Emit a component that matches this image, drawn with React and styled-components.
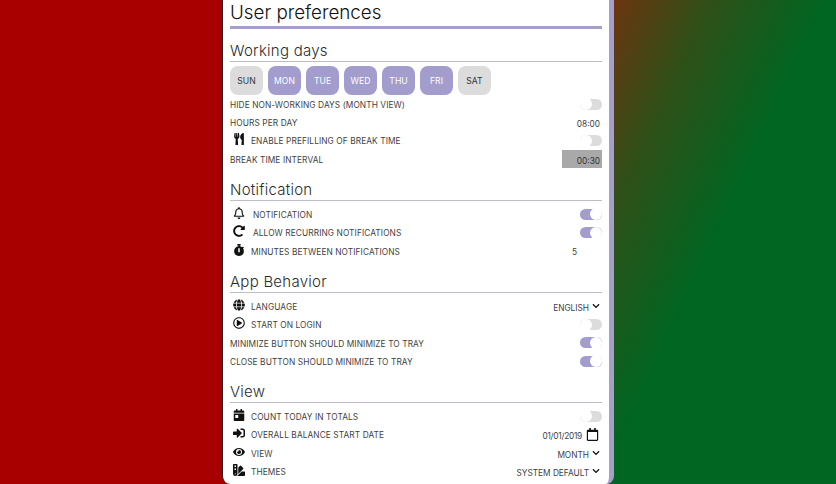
import styled, { createGlobalStyle } from "styled-components";
import {
  FaUtensils,
  FaRegBell,
  FaRedoAlt,
  FaStopwatch,
  FaGlobe,
  FaRegPlayCircle,
  FaCalendarDay,
  FaSignInAlt,
  FaEye,
  FaSwatchbook,
  FaRegCalendar,
  FaChevronDown,
} from "react-icons/fa";

const GlobalStyle = createGlobalStyle`
  html, body {
    margin: 0;
    height: 100%;
    overflow: hidden;
  }
  body {
    font-family: Inter, "Liberation Sans", sans-serif;
    color: #333;
  }
`;

const Page = styled.div`
  width: 836px;
  height: 484px;
  display: flex;
  justify-content: flex-start;
  padding-left: 222px;
  box-sizing: border-box;
  background: linear-gradient(115deg, #a80000 47%, #6b3510 58%, #2f5018 67%, #006622 78%);
`;

const Panel = styled.div`
  width: 392px;
  height: 484px;
  box-sizing: border-box;
  padding: 0 7px 0 7px;
  background: #fff;
  border-left: 1px solid #222;
  border-right: 5px solid #a59fcb;
  border-radius: 0 0 8px 8px;
  overflow: hidden;
`;

const Title = styled.h1`
  margin: 0;
  height: 29px;
  box-sizing: border-box;
  padding-top: 2px;
  font-size: 18.8px;
  line-height: 22px;
  font-weight: 300;
  color: #111;
  border-bottom: 3px solid #a5a1c6;
`;

const Section = styled.section`
  margin-top: 11px;
`;

const Heading = styled.h2`
  margin: 0;
  height: 21px;
  font-size: 15px;
  line-height: 21px;
  font-weight: 300;
  letter-spacing: 0.25px;
  color: #2c2c2c;
  border-bottom: 1px solid #bdbcc8;
`;

const Days = styled.div`
  display: flex;
  gap: 5px;
  margin-top: 4px;
`;

const Day = styled.div`
  width: 33px;
  height: 29px;
  border-radius: 8px;
  display: flex;
  align-items: center;
  justify-content: center;
  font-size: 8.6px;
  background: ${({ $on }) => ($on ? "#a29dcd" : "#dcdcdc")};
  color: ${({ $on }) => ($on ? "#fff" : "#333")};
`;

const Rows = styled.div`
  margin-top: ${({ $top }) => $top}px;
`;

const Row = styled.div`
  height: 18.3px;
  display: flex;
  align-items: center;
  justify-content: space-between;
  font-size: 8.3px;
  letter-spacing: 0.1px;
  color: #3f3f3f;
`;

const Label = styled.div`
  display: flex;
  align-items: center;
  padding-top: 1.4px;
`;

const IconSlot = styled.span`
  width: ${({ $wide }) => ($wide ? 23 : 21)}px;
  display: flex;
  padding-left: 3px;
  box-sizing: border-box;
  font-size: 12px;
  color: #111;
  margin-top: -4px;
`;

const Toggle = styled.span`
  position: relative;
  width: 22px;
  height: 11px;
  border-radius: 6px;
  background: ${({ $on }) => ($on ? "#a29dcd" : "#dcdcdc")};
  &::after {
    content: "";
    position: absolute;
    top: -0.5px;
    ${({ $on }) => ($on ? "right: 0;" : "left: 0;")}
    width: 12px;
    height: 12px;
    border-radius: 50%;
    background: #fff;
  }
`;

const Value = styled.div`
  display: flex;
  align-items: center;
  gap: ${({ $gap }) => $gap || 3}px;
  padding-top: 3px;
  padding-right: ${({ $pad }) => $pad}px;
  letter-spacing: 0;
  svg {
    color: #111;
    margin-top: -4px;
  }
`;

const DateText = styled.span`
  letter-spacing: -0.25px;
`;

const TimeBox = styled.div`
  align-self: stretch;
  width: 40px;
  display: flex;
  align-items: center;
  justify-content: flex-end;
  padding: 3px 2px 0 0;
  box-sizing: border-box;
  background: #a9a9a9;
  color: #333;
  letter-spacing: 0;
`;

const ChevronValue = ({ children }) => (
  <Value $pad={2}>
    {children}
    <FaChevronDown size={8} />
  </Value>
);

const days = [
  ["SUN", false],
  ["MON", true],
  ["TUE", true],
  ["WED", true],
  ["THU", true],
  ["FRI", true],
  ["SAT", false],
];

export default function App() {
  return (
    <Page>
      <GlobalStyle />
      <Panel>
        <Title>User preferences</Title>
        <Section>
          <Heading>Working days</Heading>
          <Days>
            {days.map(([name, on]) => (
              <Day key={name} $on={on}>
                {name}
              </Day>
            ))}
          </Days>
          <Rows $top={0}>
            <Row>
              <Label>HIDE NON-WORKING DAYS (MONTH VIEW)</Label>
              <Toggle />
            </Row>
            <Row>
              <Label>HOURS PER DAY</Label>
              <Value $pad={2}>08:00</Value>
            </Row>
            <Row>
              <Label>
                <IconSlot>
                  <FaUtensils />
                </IconSlot>
                ENABLE PREFILLING OF BREAK TIME
              </Label>
              <Toggle />
            </Row>
            <Row>
              <Label>BREAK TIME INTERVAL</Label>
              <TimeBox>00:30</TimeBox>
            </Row>
          </Rows>
        </Section>
        <Section>
          <Heading>Notification</Heading>
          <Rows $top={4}>
            <Row>
              <Label>
                <IconSlot $wide>
                  <FaRegBell />
                </IconSlot>
                NOTIFICATION
              </Label>
              <Toggle $on />
            </Row>
            <Row>
              <Label>
                <IconSlot $wide>
                  <FaRedoAlt />
                </IconSlot>
                ALLOW RECURRING NOTIFICATIONS
              </Label>
              <Toggle $on />
            </Row>
            <Row>
              <Label>
                <IconSlot>
                  <FaStopwatch />
                </IconSlot>
                MINUTES BETWEEN NOTIFICATIONS
              </Label>
              <Value $pad={25}>5</Value>
            </Row>
          </Rows>
        </Section>
        <Section>
          <Heading>App Behavior</Heading>
          <Rows $top={4}>
            <Row>
              <Label>
                <IconSlot>
                  <FaGlobe />
                </IconSlot>
                LANGUAGE
              </Label>
              <ChevronValue>ENGLISH</ChevronValue>
            </Row>
            <Row>
              <Label>
                <IconSlot>
                  <FaRegPlayCircle />
                </IconSlot>
                START ON LOGIN
              </Label>
              <Toggle />
            </Row>
            <Row>
              <Label>MINIMIZE BUTTON SHOULD MINIMIZE TO TRAY</Label>
              <Toggle $on />
            </Row>
            <Row>
              <Label>CLOSE BUTTON SHOULD MINIMIZE TO TRAY</Label>
              <Toggle $on />
            </Row>
          </Rows>
        </Section>
        <Section>
          <Heading>View</Heading>
          <Rows $top={4}>
            <Row>
              <Label>
                <IconSlot>
                  <FaCalendarDay />
                </IconSlot>
                COUNT TODAY IN TOTALS
              </Label>
              <Toggle />
            </Row>
            <Row>
              <Label>
                <IconSlot>
                  <FaSignInAlt />
                </IconSlot>
                OVERALL BALANCE START DATE
              </Label>
              <Value $pad={3} $gap={4}>
                <DateText>01/01/2019</DateText>
                <FaRegCalendar size={13} />
              </Value>
            </Row>
            <Row>
              <Label>
                <IconSlot>
                  <FaEye />
                </IconSlot>
                VIEW
              </Label>
              <ChevronValue>MONTH</ChevronValue>
            </Row>
            <Row>
              <Label>
                <IconSlot>
                  <FaSwatchbook />
                </IconSlot>
                THEMES
              </Label>
              <ChevronValue>SYSTEM DEFAULT</ChevronValue>
            </Row>
          </Rows>
        </Section>
      </Panel>
    </Page>
  );
}
